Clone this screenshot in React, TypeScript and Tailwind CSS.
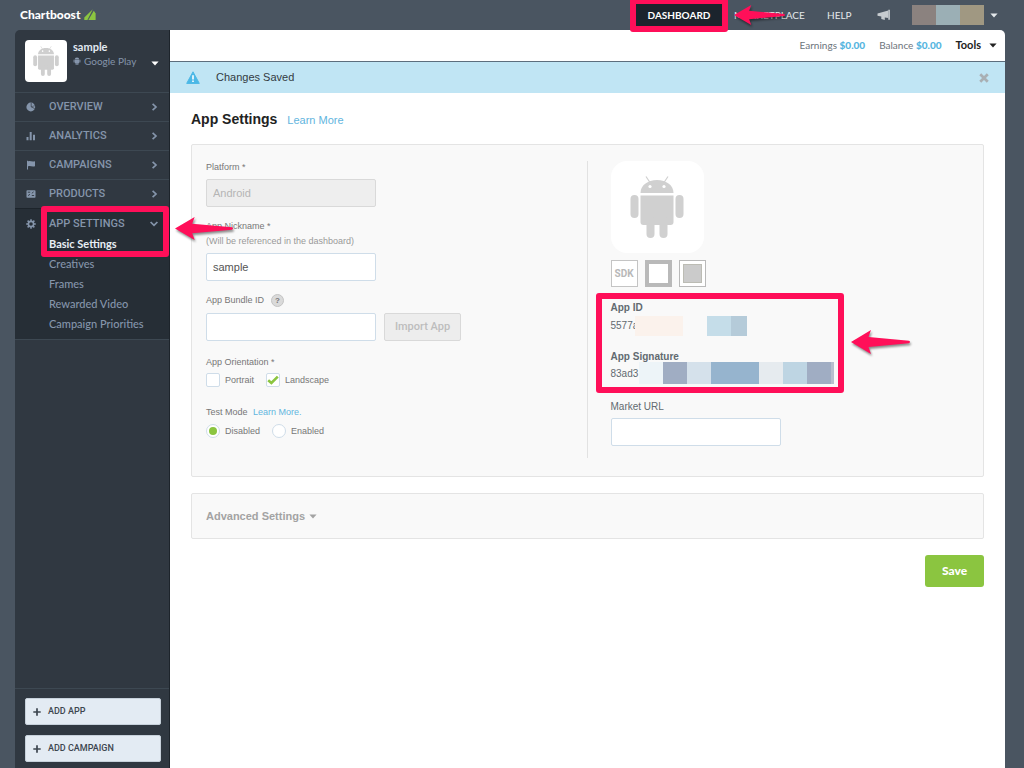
import { useState } from "react";
import type { ReactNode } from "react";

const navItems = [
  { label: "OVERVIEW", icon: "pie" },
  { label: "ANALYTICS", icon: "bars" },
  { label: "CAMPAIGNS", icon: "flag" },
  { label: "PRODUCTS", icon: "card" },
];

const subItems = ["Basic Settings", "Creatives", "Frames", "Rewarded Video", "Campaign Priorities"];

const NavIcon = ({ name }: { name: string }) => (
  <svg viewBox="0 0 10 10" className="h-[10px] w-[10px] shrink-0" fill="currentColor" aria-hidden="true">
    {name === "pie" && (
      <>
        <circle cx="4.8" cy="5" r="4.4" />
        <path d="M5.2 0.8V4.8L8.8 6.6" stroke="#303841" strokeWidth="0.7" fill="none" />
        <path d="M5.2 4.8L9.2 3.6" stroke="#303841" strokeWidth="0.5" />
      </>
    )}
    {name === "bars" && <path d="M0.5 6h2v3.3h-2zM3.7 1h2v8.3h-2zM7 3.8h2v5.5h-2z" />}
    {name === "flag" && <path d="M1 0.8h1v0.6c2-.9 3.6 0.6 7-.2v5c-3.4 0.8-5-.8-7 0.2v3.1h-1z" />}
    {name === "card" && (
      <>
        <rect x="0.5" y="1.3" width="9" height="7.5" rx="0.8" />
        <path d="M1.8 3.2h2.4M5.8 4.3l1.8-1.4M2 6.6l2-1.3M5.8 6.5h2.3" stroke="#303841" strokeWidth="0.9" />
      </>
    )}
    {name === "gear" && (
      <>
        <circle cx="5" cy="5" r="2.6" fill="none" stroke="currentColor" strokeWidth="1.6" />
        <path
          d="M5 0.2v1.8M5 8v1.8M0.2 5h1.8M8 5h1.8M1.6 1.6l1.3 1.3M7.1 7.1l1.3 1.3M1.6 8.4l1.3-1.3M7.1 2.9l1.3-1.3"
          stroke="currentColor"
          strokeWidth="1.5"
        />
      </>
    )}
  </svg>
);

const Chevron = ({ down = false }: { down?: boolean }) => (
  <svg viewBox="0 0 8 8" className="ml-auto h-2 w-2" fill="none" stroke="currentColor" strokeWidth="1.7" aria-hidden="true">
    <path d={down ? "M0.6 2L4 5.4L7.4 2" : "M2.6 0.8L6 4L2.6 7.2"} />
  </svg>
);

const Caret = ({ className = "" }: { className?: string }) => (
  <svg viewBox="0 0 8 5" className={`h-[5px] w-2 ${className}`} fill="currentColor" aria-hidden="true">
    <path d="M0.4 0.4h7.2L4 4.4z" />
  </svg>
);

const Android = ({ className = "" }: { className?: string }) => (
  <svg viewBox="0 0 54 62" className={className} fill="currentColor" aria-hidden="true">
    <path d="M10.5 17C10.5 9.5 17.5 4 27 4s16.5 5.500 16.5 13z" />
    <path d="M16 0.5l4 6M38 0.5l-4 6" stroke="currentColor" strokeWidth="1.2" />
    <circle cx="20" cy="10.5" r="1.6" fill="white" />
    <circle cx="34" cy="10.5" r="1.6" fill="white" />
    <path d="M10.5 19.5h33V46a3 3 0 0 1-3 3h-27a3 3 0 0 1-3-3z" />
    <rect x="0.5" y="19" width="8" height="23" rx="4" />
    <rect x="45.5" y="19" width="8" height="23" rx="4" />
    <rect x="16.5" y="40" width="8" height="22" rx="4" />
    <rect x="29.5" y="40" width="8" height="22" rx="4" />
  </svg>
);

const Arrow = ({ className }: { className: string }) => (
  <svg
    viewBox="0 0 59 24"
    preserveAspectRatio="none"
    className={`pointer-events-none absolute z-20 overflow-visible drop-shadow-[1px_2px_1px_rgba(0,0,0,0.45)] ${className}`}
    aria-hidden="true"
  >
    <path d="M0 12L20 0L17.500 7L58 10.8Q60 12 58 13.2L17.5 17L20 24Z" fill="#ff0f59" />
  </svg>
);

const Outline = ({ className }: { className: string }) => (
  <div className={`pointer-events-none absolute z-10 rounded-[3px] border-[6px] border-[#ff0f59] ${className}`} />
);

const Mosaic = ({ blocks, className }: { blocks: string[]; className: string }) => (
  <div className={`flex ${className}`}>
    {blocks.map((b, i) => (
      <span key={i} className={b} />
    ))}
  </div>
);

const Choice = ({
  type,
  label,
  checked,
  onChange,
}: {
  type: "checkbox" | "radio";
  label: string;
  checked: boolean;
  onChange: () => void;
}) => (
  <label className="flex items-center gap-[5px] text-[9px] leading-[14px] text-[#777]">
    <span className="grid h-[14px] w-[14px] place-items-center">
      <input
        type={type}
        checked={checked}
        onChange={onChange}
        className={`col-start-1 row-start-1 h-[14px] w-[14px] appearance-none border border-[#cfdde9] bg-white ${
          type === "radio" ? "rounded-full" : "rounded-[2px]"
        }`}
      />
      {checked && type === "radio" && (
        <span className="pointer-events-none col-start-1 row-start-1 h-2 w-2 rounded-full bg-[#8bc540]" />
      )}
      {checked && type === "checkbox" && (
        <svg viewBox="0 0 12 10" className="pointer-events-none col-start-1 row-start-1 h-[10px] w-3" aria-hidden="true">
          <path d="M1.2 5.2L4.4 8L10.8 1.6" fill="none" stroke="#8bc540" strokeWidth="2.6" />
        </svg>
      )}
    </span>
    {label}
  </label>
);

const AddButton = ({ children }: { children: ReactNode }) => (
  <button className="flex h-[27px] w-full items-center rounded-[2px] border border-[#c6d0da] bg-[#e3ebf3] pl-[7px] text-[9px] font-medium text-[#3d464f]">
    <svg viewBox="0 0 8 8" className="mr-[7px] h-2 w-2" aria-hidden="true">
      <path d="M4 0.3v7.4M0.3 4h7.4" stroke="currentColor" strokeWidth="1.7" />
    </svg>
    {children}
  </button>
);

const fieldClass = "block h-7 w-[170px] rounded-[2px] border border-[#cfdde9] bg-white px-1.5 text-[11px] text-[#555]";
const labelClass = "block text-[9px] leading-3 text-[#777]";

const TopNav = () => (
  <header className="flex h-[30px] items-center pr-[26px] pl-5 font-['Lato',sans-serif] text-[#e4e8eb]">
    <a href="#" className="flex items-center gap-1 text-xs font-black text-white">
      Chartboost
      <svg viewBox="0 0 12 12" className="h-3 w-3" aria-hidden="true">
        <path d="M0.3 8.6L8.8 0.3L4.8 8.2L3.4 11H0.3z" fill="#8bc540" />
        <path d="M9.8 1.8L11.6 4.4V11H4.4z" fill="#8bc540" />
      </svg>
    </a>
    <nav className="ml-auto flex items-center text-[10px]">
      <div className="relative">
        <a href="#" className="flex h-[22px] w-[86px] items-center justify-center bg-[#1b242d] font-bold text-white">
          DASHBOARD
        </a>
        <Outline className="-inset-x-1.5 -top-1.5 -bottom-1.5" />
      </div>
      <div className="relative ml-3 w-[70px]">
        <a href="#">MARKETPLACE</a>
        <Arrow className="-top-[3px] left-0 h-5 w-[51px]" />
      </div>
      <a href="#" className="ml-[23px] w-[26px]">
        HELP
      </a>
    </nav>
    <button className="ml-6" aria-label="Announcements">
      <svg viewBox="0 0 14 12" className="h-3 w-[14px]" fill="#c7ccd0" aria-hidden="true">
        <path d="M0.5 4.6L11.3 1.6V9L7.8 8.6V11L4.3 10V7.6L0.5 6.8z" />
        <path d="M11.3 0.8h1.6v10h-1.6z" />
      </svg>
    </button>
    <button className="ml-[21px] flex items-center gap-1.5" aria-label="Account">
      <Mosaic
        className="h-5"
        blocks={["w-6 bg-[#8b827f]", "w-6 bg-[#9bafb5]", "w-6 bg-[#a09882]"]}
      />
      <Caret />
    </button>
  </header>
);

const Sidebar = () => (
  <aside className="relative flex w-[155px] shrink-0 flex-col rounded-tl-[5px] border-r border-[#1d242b] bg-[#303841] font-['Roboto',sans-serif] text-[#8595ab]">
    <div className="flex h-[62px] items-start px-[10px] pt-[10px]">
      <div className="flex h-[42px] w-[42px] items-center justify-center rounded-[4px] bg-white">
        <Android className="h-[30px] w-[26px] text-[#cfcfcf]" />
      </div>
      <div className="ml-1.5 font-['Lato',sans-serif]">
        <div className="text-[11px] leading-[14px] font-bold text-[#e3ebf3]">sample</div>
        <div className="flex items-center gap-[3px] text-[10px] leading-[14px] whitespace-nowrap">
          <Android className="h-2 w-2" />
          Google Play
        </div>
      </div>
      <button className="mt-[21px] ml-auto text-white" aria-label="Switch app">
        <Caret className="block" />
      </button>
    </div>
    <nav className="border-b border-[#3d4852]">
      {navItems.map((item) => (
        <button
          key={item.label}
          className="flex h-[29px] w-full items-center border-t border-[#3d4852] px-[11px] text-[11px] font-medium"
        >
          <NavIcon name={item.icon} />
          <span className="ml-[13px]">{item.label}</span>
          <Chevron />
        </button>
      ))}
      <div className="relative bg-[#262e36] pb-[5px] shadow-[inset_0_1px_0_#1d242b]">
        <button className="flex h-8 w-full items-center px-[11px] text-[11px] font-medium">
          <NavIcon name="gear" />
          <span className="ml-[13px]">APP SETTINGS</span>
          <Chevron down />
        </button>
        <ul className="-mt-1.5 pl-[34px] font-['Lato',sans-serif] text-[11px] leading-5 font-medium">
          {subItems.map((s, i) => (
            <li key={s}>
              <a href="#" className={i === 0 ? "font-bold text-[#e9eef5]" : ""}>
                {s}
              </a>
            </li>
          ))}
        </ul>
        <Outline className="-top-[2px] right-0 left-[26px] h-[51px]" />
        <Arrow className="top-[9px] left-full ml-1.5 h-[23px] w-[58px]" />
      </div>
    </nav>
    <div className="mt-auto flex flex-col gap-[10px] border-t border-[#3d4852] pt-[9px] pr-2 pb-1.5 pl-[10px]">
      <AddButton>ADD APP</AddButton>
      <AddButton>ADD CAMPAIGN</AddButton>
    </div>
  </aside>
);

const SettingsForm = () => {
  const [nickname, setNickname] = useState("sample");
  const [bundleId, setBundleId] = useState("");
  const [portrait, setPortrait] = useState(false);
  const [landscape, setLandscape] = useState(true);
  const [testMode, setTestMode] = useState(false);

  return (
    <div className="w-1/2 border-r border-[#e2e2e2] pb-5">
      <label htmlFor="platform" className={labelClass}>
        Platform *
      </label>
      <input
        id="platform"
        disabled
        value="Android"
        className="mt-1.5 block h-7 w-[170px] rounded-[2px] border border-[#d9d9d9] bg-[#eeeeee] px-1.5 text-[11px] text-[#b5b5b5]"
      />

      <label htmlFor="nickname" className={`${labelClass} mt-[13px]`}>
        App Nickname *
      </label>
      <div className="mt-[3px] text-[9px] leading-3 text-[#999]">(Will be referenced in the dashboard)</div>
      <input
        id="nickname"
        value={nickname}
        onChange={(e) => setNickname(e.target.value)}
        className={`${fieldClass} mt-1.5`}
      />

      <div className="mt-3 flex h-[14px] items-center gap-[7px]">
        <label htmlFor="bundle" className={labelClass}>
          App Bundle ID
        </label>
        <button className="h-[13px] w-[13px] rounded-full border border-[#c4c4c4] bg-[#dadada] text-[8px] leading-[11px] font-bold text-[#777]">
          ?
        </button>
      </div>
      <div className="mt-1.5 flex gap-2">
        <input
          id="bundle"
          value={bundleId}
          onChange={(e) => setBundleId(e.target.value)}
          className={fieldClass}
        />
        <button
          disabled
          className="h-7 w-[77px] rounded-[2px] border border-[#d9d9d9] bg-[#ededed] font-['Roboto',sans-serif] text-[11px] font-medium text-[#bdbdbd]"
        >
          Import App
        </button>
      </div>

      <div className={`${labelClass} mt-[15px]`}>App Orientation *</div>
      <div className="mt-[5px] flex gap-3">
        <Choice type="checkbox" label="Portrait" checked={portrait} onChange={() => setPortrait(!portrait)} />
        <Choice type="checkbox" label="Landscape" checked={landscape} onChange={() => setLandscape(!landscape)} />
      </div>

      <div className={`${labelClass} mt-[19px]`}>
        Test Mode{" "}
        <a href="#" className="ml-[3px] text-[#62b5de]">
          Learn More.
        </a>
      </div>
      <div className="mt-1.5 flex gap-3">
        <Choice type="radio" label="Disabled" checked={!testMode} onChange={() => setTestMode(false)} />
        <Choice type="radio" label="Enabled" checked={testMode} onChange={() => setTestMode(true)} />
      </div>
    </div>
  );
};

const AppDetails = () => {
  const [marketUrl, setMarketUrl] = useState("");

  return (
    <div className="pl-[23px] text-[10px] text-[#626a70]">
      <div className="flex h-[92px] w-[93px] items-center justify-center rounded-2xl bg-white">
        <Android className="h-[62px] w-[54px] text-[#d0d0d0]" />
      </div>
      <div className="mt-[7px] flex gap-[7px]">
        <div className="flex h-[27px] w-[27px] items-center justify-center border border-[#c4c4c4] bg-white font-['Roboto',sans-serif] font-bold text-[#b8b8b8]">
          SDK
        </div>
        <div className="h-[27px] w-[27px] border-4 border-[#b9b9b9] bg-white" />
        <div className="h-[27px] w-[27px] border border-[#b9b9b9] bg-white p-[3px]">
          <div className="h-full border border-[#bcbcb4] bg-[#cbcbcb]" />
        </div>
      </div>

      <div className="relative mt-[15px]">
        <div className="leading-3 font-bold">App ID</div>
        <div className="mt-[2px] flex h-5 leading-5">
          <span className="w-6">5577a</span>
          <Mosaic
            className="relative h-5"
            blocks={["w-12 bg-[#fbf2ec]", "w-6 bg-[#f9f9f9]", "w-6 bg-[#c5dde9]", "w-4 bg-[#b5cbd9]"]}
          />
        </div>
        <div className="mt-[15px] leading-3 font-bold">App Signature</div>
        <div className="-mt-px flex h-[22px] leading-6">
          <span className="w-7">83ad3</span>
          <Mosaic
            className="relative h-[22px]"
            blocks={[
              "w-6 bg-[#edf4f8]",
              "w-6 bg-[#a0adc3]",
              "w-6 bg-[#d5e1eb]",
              "w-12 bg-[#96b4ce]",
              "w-6 bg-[#e6ebef]",
              "w-6 bg-[#bed5e3]",
              "w-6 bg-[#a0adc3]",
              "w-[3px] bg-[#b8bfcd]",
            ]}
          />
        </div>
        <Outline className="-top-[9px] -left-[15px] h-[100px] w-[248px]" />
        <Arrow className="top-7 left-[240px] h-6 w-[59px]" />
      </div>

      <label htmlFor="market" className="mt-[17px] block leading-3">
        Market URL
      </label>
      <input
        id="market"
        value={marketUrl}
        onChange={(e) => setMarketUrl(e.target.value)}
        className={`${fieldClass} mt-[5px]`}
      />
    </div>
  );
};

const App = () => {
  const [alertOpen, setAlertOpen] = useState(true);

  return (
    <div className="flex min-h-screen flex-col bg-[#4a5561] font-['Liberation_Sans',Arial,sans-serif]">
      <TopNav />
      <div className="mr-[19px] ml-[15px] flex grow">
        <Sidebar />
        <main className="grow rounded-tr-[5px] bg-white">
          <div className="flex h-8 items-center justify-end border-b border-[#5d6e7d] pr-2 font-['Lato',sans-serif] text-[10px] text-[#6c747b]">
            <span>
              Earnings <b className="font-black text-[#55b5e0]">$0.00</b>
            </span>
            <span className="ml-[14px]">
              Balance <b className="font-black text-[#55b5e0]">$0.00</b>
            </span>
            <button className="ml-[14px] flex items-center gap-2 text-[11px] font-bold text-[#222]">
              Tools <Caret />
            </button>
          </div>

          {alertOpen && (
            <div className="flex h-[31px] items-center bg-[#c0e5f4] px-4 text-[11px] text-[#333b42]">
              <svg viewBox="0 0 14 13" className="h-[13px] w-[14px]" aria-hidden="true">
                <path d="M7 0.8L13.3 12.4H0.7z" fill="#4cb8e6" stroke="#4cb8e6" strokeLinejoin="round" />
                <path d="M7 4.2v4.2M7 9.6v1.5" stroke="white" strokeWidth="1.6" />
              </svg>
              <span className="ml-4">Changes Saved</span>
              <button className="ml-auto text-[#a9afb3]" aria-label="Dismiss" onClick={() => setAlertOpen(false)}>
                <svg viewBox="0 0 8 8" className="h-[10px] w-[10px]" aria-hidden="true">
                  <path d="M1 1l6 6M7 1l-6 6" stroke="currentColor" strokeWidth="2.2" />
                </svg>
              </button>
            </div>
          )}

          <div className="px-[21px] pt-4">
            <div className="flex h-[19px] items-baseline gap-[10px]">
              <h1 className="text-sm font-bold text-[#222]">App Settings</h1>
              <a href="#" className="text-[11px] text-[#62b5de]">
                Learn More
              </a>
            </div>

            <section className="mt-4 flex rounded-[2px] border border-[#e4e4e4] bg-[#f9f9f9] px-[14px] pt-4 pb-[18px]">
              <SettingsForm />
              <AppDetails />
            </section>

            <section className="mt-4 flex h-[46px] items-center rounded-[2px] border border-[#e4e4e4] bg-[#f9f9f9] px-[14px]">
              <button className="flex items-center gap-1 text-[11px] font-bold text-[#a3a3a3]">
                Advanced Settings <Caret />
              </button>
            </section>

            <div className="mt-4 flex justify-end">
              <button className="h-8 w-[59px] rounded-[3px] bg-[#8bc540] font-['Lato',sans-serif] text-xs font-black text-white">
                Save
              </button>
            </div>
          </div>
        </main>
      </div>
    </div>
  );
};

export default App;
